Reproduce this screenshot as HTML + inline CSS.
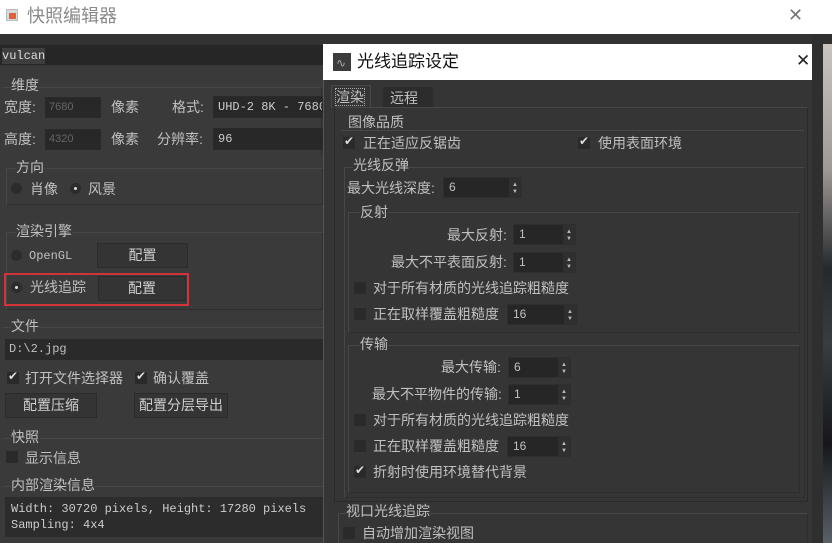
<!DOCTYPE html>
<html><head><meta charset="utf-8"><style>
*{margin:0;padding:0;box-sizing:border-box}
html{width:832px;height:543px;overflow:hidden}
body{width:832px;height:543px;overflow:hidden;background:#3a3a3a;position:relative;font-family:"Liberation Sans","Noto Sans CJK SC",sans-serif;font-size:14px;color:#c0c0c0}
div,span{position:absolute}
.t{white-space:nowrap;line-height:16px}
.in{background:#282828;border:1px solid #2a2a2a}
.btn{background:#343434;border:1px solid #2b2b2b;color:#cfcfcf;text-align:center;line-height:22px}
.g{border:1px solid #474747;border-right-color:#2e2e2e;border-bottom-color:#2e2e2e}
.cb{width:12px;height:12px;background:#2a2a2a}
.ck::after{content:"✔";position:absolute;left:1px;top:-3px;font-size:12px;color:#ddd}
.rd{width:11px;height:11px;border-radius:50%;background:#2c2c2c}
.rd.on::after{content:"";position:absolute;left:4px;top:4px;width:3px;height:3px;border-radius:50%;background:#ddd}
.mono{font-family:"Liberation Mono","Noto Sans CJK SC",monospace;font-size:12px}
.sp{background:#262626;border:1px solid #2e2e2e}
.sp::after{content:"";position:absolute;right:0;top:0;width:12px;height:100%;background:#2f2f2f}
.sp b{position:absolute;right:3px;font-size:6px;color:#bbb;z-index:2;font-weight:normal;line-height:6px}
</style></head><body>
<div style="left:0;top:0;width:832px;height:34px;background:#fff"></div>
<div style="left:6px;top:9px;width:12px;height:12px;background:#d9d9d9;border:1px solid #bbb"><span style="left:2px;top:3px;width:7px;height:6px;background:#e0603a"></span></div>
<div class="t" style="left:27px;top:6px;font-size:18px;line-height:20px;color:#8a8a8a">快照编辑器</div>
<div class="t" style="left:788px;top:7px;font-size:18px;color:#777">✕</div>
<div style="left:0;top:34px;width:832px;height:11px;background:#333"></div>
<div style="left:0;top:45px;width:323px;height:20px;background:#262626"></div>
<div class="t mono" style="left:2px;top:48px;background:#3e3e3e;color:#ddd">vulcan</div>

<div class="g" style="left:3px;top:87px;width:319px;height:70px;border-bottom:none;border-left:none"></div>
<div class="t" style="left:11px;top:77px;background:#3a3a3a">维度</div>
<div class="t" style="left:4px;top:99px">宽度:</div>
<div class="in t" style="left:45px;top:97px;width:56px;height:21px;font-size:11px;line-height:19px;color:#666;padding-left:3px">7680</div>
<div class="t" style="left:111px;top:99px">像素</div>
<div class="t" style="left:172px;top:99px">格式:</div>
<div class="in t mono" style="left:213px;top:96px;width:110px;height:22px;line-height:20px;color:#ccc;padding-left:4px;overflow:hidden">UHD-2 8K - 7680</div>
<div class="t" style="left:4px;top:131px">高度:</div>
<div class="in t" style="left:45px;top:129px;width:56px;height:21px;font-size:11px;line-height:19px;color:#666;padding-left:3px">4320</div>
<div class="t" style="left:111px;top:131px">像素</div>
<div class="t" style="left:157px;top:131px">分辨率:</div>
<div class="in t mono" style="left:213px;top:128px;width:110px;height:22px;line-height:20px;color:#ccc;padding-left:4px">96</div>

<div class="g" style="left:6px;top:168px;width:317px;height:37px"></div>
<div class="t" style="left:16px;top:159px;background:#3a3a3a">方向</div>
<div class="rd" style="left:11px;top:183px"></div><div class="t" style="left:30px;top:181px">肖像</div>
<div class="rd on" style="left:70px;top:183px"></div><div class="t" style="left:88px;top:181px">风景</div>

<div class="g" style="left:6px;top:232px;width:317px;height:78px"></div>
<div class="t" style="left:16px;top:223px;background:#3a3a3a">渲染引擎</div>
<div class="rd" style="left:11px;top:250px"></div><div class="t mono" style="left:29px;top:248px">OpenGL</div>
<div class="btn" style="left:97px;top:243px;width:91px;height:25px">配置</div>
<div style="left:4px;top:273px;width:185px;height:33px;border:2px solid #d0343a"></div>
<div class="rd on" style="left:11px;top:282px"></div><div class="t" style="left:30px;top:279px">光线追踪</div>
<div class="btn" style="left:98px;top:276px;width:88px;height:25px">配置</div>

<div style="left:3px;top:327px;width:320px;height:1px;background:#474747"></div>
<div class="t" style="left:11px;top:318px;background:#3a3a3a">文件</div>
<div class="in t mono" style="left:5px;top:339px;width:318px;height:21px;line-height:19px;padding-left:3px;background:#2a2a2a">D:\2.jpg</div>
<div class="cb ck" style="left:7px;top:372px"></div><div class="t" style="left:25px;top:370px">打开文件选择器</div>
<div class="cb ck" style="left:135px;top:372px"></div><div class="t" style="left:153px;top:370px">确认覆盖</div>
<div class="btn" style="left:5px;top:393px;width:92px;height:25px">配置压缩</div>
<div class="btn" style="left:134px;top:393px;width:94px;height:25px">配置分层导出</div>
<div style="left:3px;top:438px;width:320px;height:1px;background:#474747"></div>
<div class="t" style="left:11px;top:429px;background:#3a3a3a">快照</div>
<div class="cb" style="left:6px;top:451px"></div><div class="t" style="left:25px;top:450px">显示信息</div>
<div style="left:3px;top:486px;width:320px;height:1px;background:#474747"></div>
<div class="t" style="left:11px;top:477px;background:#3a3a3a">内部渲染信息</div>
<div class="t mono" style="left:5px;top:497px;width:318px;height:40px;background:#2c2c2c;padding:4px 6px;line-height:16px;color:#ccc">Width: 30720 pixels, Height: 17280 pixels<br>Sampling: 4x4</div>

<div style="left:812px;top:34px;width:20px;height:509px;background:#2f2f2f"></div>
<div style="left:823px;top:44px;width:9px;height:499px;background:linear-gradient(#c9c4c0,#a09a96 25%,#25292d 45%,#3a3d40 60%,#15171a 80%,#5a6068)"></div>

<div style="left:323px;top:44px;width:489px;height:499px;background:#353535;border-left:1px solid #555"></div>
<div style="left:323px;top:44px;width:489px;height:36px;background:#fff"></div>
<div style="left:333px;top:53px;width:18px;height:18px;background:#3c3c3c"><span style="left:3px;top:4px;font-size:12px;line-height:12px;color:#aaa">∿</span></div>
<div class="t" style="left:357px;top:52px;font-size:17px;line-height:20px;color:#111">光线追踪设定</div>
<div class="t" style="left:796px;top:53px;font-size:17px;color:#222">✕</div>
<div style="left:383px;top:87px;width:50px;height:20px;background:#2c2c2c"></div>
<div class="t" style="left:390px;top:90px">远程</div>
<div style="left:331px;top:85px;width:40px;height:23px;background:#353535;border:1px solid #484848;border-bottom:none"></div>
<div class="t" style="left:336px;top:89px;outline:1px dotted #aaa">渲染</div>
<div style="left:334px;top:107px;width:474px;height:395px;border:1px solid #2a2a2a;border-top-color:#474747"></div>
<div style="left:341px;top:130px;width:463px;height:1px;background:#474747"></div>
<div class="t" style="left:348px;top:114px;background:#353535">图像品质</div>
<div class="cb ck" style="left:343px;top:137px"></div><div class="t" style="left:363px;top:135px">正在适应反锯齿</div>
<div class="cb ck" style="left:578px;top:137px"></div><div class="t" style="left:598px;top:135px">使用表面环境</div>
<div class="g" style="left:344px;top:167px;width:461px;height:331px"></div>
<div class="t" style="left:353px;top:157px;background:#353535">光线反弹</div>
<div class="t" style="left:347px;top:180px">最大光线深度:</div>
<div class="sp t" style="left:443px;top:177px;width:79px;height:21px;line-height:19px;padding-left:5px;font-size:12px">6<b style="top:4px">▲</b><b style="top:11px">▼</b></div>
<div class="g" style="left:348px;top:212px;width:452px;height:121px"></div>
<div class="t" style="left:360px;top:204px;background:#353535">反射</div>
<div class="t" style="left:447px;top:227px">最大反射:</div>
<div class="sp t" style="left:513px;top:224px;width:63px;height:21px;line-height:19px;padding-left:5px;font-size:12px">1<b style="top:4px">▲</b><b style="top:11px">▼</b></div>
<div class="t" style="left:391px;top:254px">最大不平表面反射:</div>
<div class="sp t" style="left:513px;top:252px;width:63px;height:21px;line-height:19px;padding-left:5px;font-size:12px">1<b style="top:4px">▲</b><b style="top:11px">▼</b></div>
<div class="cb" style="left:354px;top:282px"></div><div class="t" style="left:373px;top:280px">对于所有材质的光线追踪粗糙度</div>
<div class="cb" style="left:354px;top:308px"></div><div class="t" style="left:373px;top:306px">正在取样覆盖粗糙度</div>
<div class="sp t" style="left:507px;top:304px;width:70px;height:21px;line-height:19px;padding-left:5px;font-size:12px">16<b style="top:4px">▲</b><b style="top:11px">▼</b></div>
<div class="g" style="left:348px;top:345px;width:452px;height:148px"></div>
<div class="t" style="left:360px;top:336px;background:#353535">传输</div>
<div class="t" style="left:441px;top:359px">最大传输:</div>
<div class="sp t" style="left:508px;top:357px;width:63px;height:21px;line-height:19px;padding-left:5px;font-size:12px">6<b style="top:4px">▲</b><b style="top:11px">▼</b></div>
<div class="t" style="left:372px;top:386px">最大不平物件的传输:</div>
<div class="sp t" style="left:508px;top:384px;width:63px;height:21px;line-height:19px;padding-left:5px;font-size:12px">1<b style="top:4px">▲</b><b style="top:11px">▼</b></div>
<div class="cb" style="left:354px;top:414px"></div><div class="t" style="left:373px;top:412px">对于所有材质的光线追踪粗糙度</div>
<div class="cb" style="left:354px;top:440px"></div><div class="t" style="left:373px;top:438px">正在取样覆盖粗糙度</div>
<div class="sp t" style="left:507px;top:436px;width:64px;height:21px;line-height:19px;padding-left:5px;font-size:12px">16<b style="top:4px">▲</b><b style="top:11px">▼</b></div>
<div class="cb ck" style="left:354px;top:466px"></div><div class="t" style="left:373px;top:464px">折射时使用环境替代背景</div>
<div class="g" style="left:338px;top:513px;width:470px;height:30px;border-bottom:none"></div>
<div class="t" style="left:346px;top:503px;background:#353535">视口光线追踪</div>
<div class="cb" style="left:343px;top:527px"></div><div class="t" style="left:362px;top:525px">自动增加渲染视图</div>
</body></html>
